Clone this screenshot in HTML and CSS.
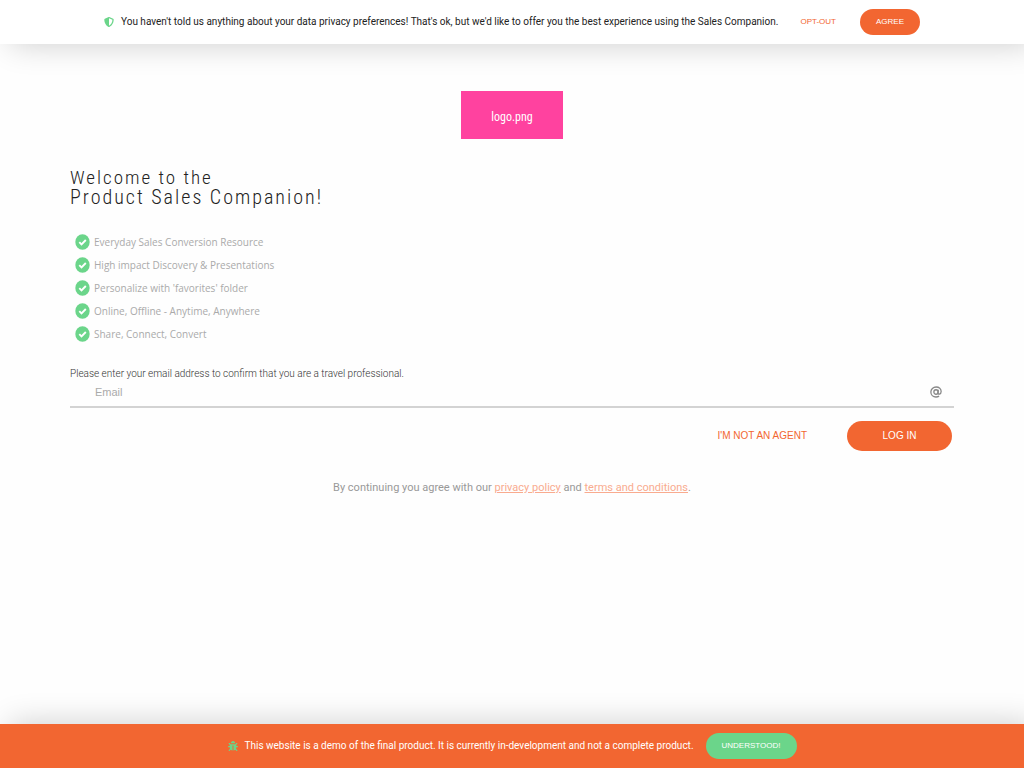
FILE: index.html
```html
<!DOCTYPE html>
<html lang="en">
<head>
<meta charset="utf-8">
<meta name="viewport" content="width=device-width, initial-scale=1">
<title>Product Sales Companion</title>
<link rel="stylesheet" href="styles.css">
</head>
<body>
<svg class="sprite" aria-hidden="true">
  <symbol id="check" viewBox="0 0 15 16">
    <ellipse cx="7.5" cy="8" rx="7.2" ry="7.8" fill="#6bd58a"/>
    <path d="M4.3 8.2 6.5 10.4 10.8 6" fill="none" stroke="#fff" stroke-width="1.9"/>
  </symbol>
</svg>
<header class="banner banner-top">
  <svg class="banner-icon" viewBox="0 0 512 512" aria-hidden="true"><path fill="#6bd58a" d="M466.5 83.700l-192-80a48.150 48.150 0 0 0-36.900 0l-192 80C27.700 91.100 16 108.600 16 128c0 198.500 114.500 335.700 221.500 380.300 11.800 4.900 25.100 4.900 36.900 0C360.100 472.600 496 349.300 496 128c0-19.400-11.700-36.900-29.500-44.300zM256.100 446.300l-.1-381 175.900 73.300c-3.300 151.400-82.100 261.100-175.800 307.700z"/></svg>
  <p class="banner-text">You haven't told us anything about your data privacy preferences! That's ok, but we'd like to offer you the best experience using the Sales Companion.</p>
  <button class="button button-small button-link" type="button">OPT-OUT</button>
  <button class="button button-small button-primary" type="button">AGREE</button>
</header>
<main class="content">
  <div class="logo" role="img" aria-label="logo.png">logo.png</div>
  <h1 class="title"><span class="title-intro">Welcome to the</span> <span class="title-name">Product Sales Companion!</span></h1>
  <ul class="features">
    <li class="feature"><svg class="check"><use href="#check"/></svg>Everyday Sales Conversion Resource</li>
    <li class="feature"><svg class="check"><use href="#check"/></svg>High impact Discovery &amp; Presentations</li>
    <li class="feature"><svg class="check"><use href="#check"/></svg>Personalize with 'favorites' folder</li>
    <li class="feature"><svg class="check"><use href="#check"/></svg>Online, Offline - Anytime, Anywhere</li>
    <li class="feature"><svg class="check"><use href="#check"/></svg>Share, Connect, Convert</li>
  </ul>
  <form class="login">
    <label class="login-label" for="email">Please enter your email address to confirm that you are a travel professional.</label>
    <div class="field">
      <input class="field-input" id="email" type="email" placeholder="Email">
      <svg class="field-icon" viewBox="0 0 24 24" fill="none" stroke="#888" stroke-width="2.600" aria-hidden="true"><ellipse cx="12" cy="12" rx="4.300" ry="4.500"/><path d="M16.500 7.500 15.800 14c0 3.400 6.500 3.200 6.500-2.800C22.300 5.500 18 2 12.300 2 6.300 2 1.700 6.300 1.700 12S6 22 12 22c2.400 0 4.300-.5 6.200-1.700"/></svg>
    </div>
    <div class="actions">
      <button class="button button-link" type="button">I'M NOT AN AGENT</button>
      <button class="button button-large button-primary" type="submit">LOG IN</button>
    </div>
  </form>
  <p class="legal">By continuing you agree with our <a class="legal-link" href="#privacy">privacy policy</a> and <a class="legal-link" href="#terms">terms and conditions</a>.</p>
</main>
<footer class="banner banner-bottom">
  <svg class="banner-icon" viewBox="0 0 512 512" aria-hidden="true"><path fill="#6bd58a" d="M512 288.900c-.5 17.400-15.200 31.100-32.700 31.100H424v16c0 21.900-4.900 42.600-13.600 61.100l60.200 60.300c12.500 12.500 12.500 32.700 0 45.200-12.500 12.500-32.700 12.500-45.200 0l-54.700-54.700C345.900 468 314.400 480 280 480V236c0-6.600-5.400-12-12-12h-24c-6.600 0-12 5.400-12 12v244c-34.400 0-65.900-12-90.700-32.100l-54.700 54.700c-12.500 12.500-32.700 12.500-45.200 0-12.500-12.500-12.500-32.700 0-45.200l60.200-60.300C92.900 378.600 88 357.900 88 336v-16H32.700C15.200 320 .5 306.300 0 288.900-.5 270.800 14 256 32 256h56v-58.700l-46.600-46.700c-12.500-12.500-12.500-32.700 0-45.200 12.500-12.500 32.700-12.500 45.200 0L141.200 160h229.500l54.600-54.600c12.500-12.500 32.700-12.500 45.200 0 12.500 12.500 12.500 32.700 0 45.200L424 197.300V256h56c18 0 32.500 14.800 32 32.900zM257 0c-61.900 0-112 50.100-112 112h224C369 50.100 318.900 0 257 0z"/></svg>
  <p class="banner-text">This website is a demo of the final product. It is currently in-development and not a complete product.</p>
  <button class="button button-small button-success" type="button">UNDERSTOOD!</button>
</footer>
</body>
</html>
```
FILE: styles.css
```css
* { box-sizing: border-box; }
body {
  margin: 0;
  min-height: 100vh;
  display: flex;
  flex-direction: column;
  background: #fefefe;
  color: #222;
  font-family: Roboto, "Liberation Sans", sans-serif;
}
.sprite { display: none; }
.banner {
  display: flex;
  align-items: center;
  justify-content: center;
  min-height: 44px;
  padding: 0 16px;
  box-shadow: 10px 0 32px rgba(0, 0, 0, 0.2);
}
.banner-top { background: #fff; }
.banner-bottom { background: #f26631; color: #fff; }
.banner-icon { width: 10px; height: 10px; margin-right: 7px; flex: none; }
.banner-text { margin: 0; font-size: 10px; line-height: 14px; }
.button {
  border: 0;
  padding: 0 16px;
  background: none;
  font-family: "Liberation Sans", Arial, sans-serif;
  font-size: 10px;
  line-height: 14px;
  white-space: nowrap;
  cursor: pointer;
}
.button-small { height: 26px; border-radius: 13px; font-size: 8px; }
.button-large { width: 105px; height: 30px; border-radius: 15px; }
.button-link { color: #f26631; }
.button-primary { background: #f26631; color: #fff; }
.button-success { margin-left: 12px; background: #6bd58a; color: #fff; }
.banner-top .button-link { margin: 0 8px 0 6px; }
.content {
  flex: 1;
  display: flex;
  flex-direction: column;
  padding: 47px 70px 24px;
}
.logo {
  align-self: center;
  display: grid;
  place-items: center;
  width: 102px;
  height: 48px;
  padding-top: 4px;
  background: #ff429f;
  color: #fff;
  font-family: "Roboto Condensed", Roboto, sans-serif;
  font-size: 12px;
}
.title {
  margin: 29px 0 0;
  font-family: "Roboto Condensed", Roboto, sans-serif;
  font-size: 20px;
  font-weight: 300;
  line-height: 20px;
  letter-spacing: 2px;
}
.title-intro, .title-name { display: block; }
.title-intro { font-size: 19px; line-height: 19px; }
.features { list-style: none; margin: 23px 0 0; padding: 0 0 0 5px; }
.feature {
  display: flex;
  align-items: center;
  gap: 4px;
  height: 23px;
  color: #aaa;
  font-family: "Open Sans", sans-serif;
  font-size: 10px;
  line-height: 12px;
}
.check { width: 15px; height: 16px; flex: none; }
.login { margin-top: 22px; }
.login-label { display: block; color: #333; font-size: 10px; font-weight: 300; line-height: 14px; }
.field { display: flex; align-items: center; height: 27px; border-bottom: 2px solid #d3d3d3; }
.field-input {
  flex: 1;
  min-width: 0;
  height: 22px;
  padding: 0 25px 3px;
  border: 0;
  outline: 0;
  background: none;
  color: #555;
  font-family: "Liberation Sans", Arial, sans-serif;
  font-size: 11px;
}
.field-input::placeholder { color: #aaa; }
.field-icon { width: 12px; height: 12px; margin: 0 12px 3px 0; flex: none; }
.actions { display: flex; justify-content: flex-end; align-items: center; gap: 24px; margin: 13px 2px 0 0; }
.legal { margin: 29px 0 0; color: #999; text-align: center; font-size: 11px; line-height: 16px; }
.legal-link { color: #f9ab8f; }
```
